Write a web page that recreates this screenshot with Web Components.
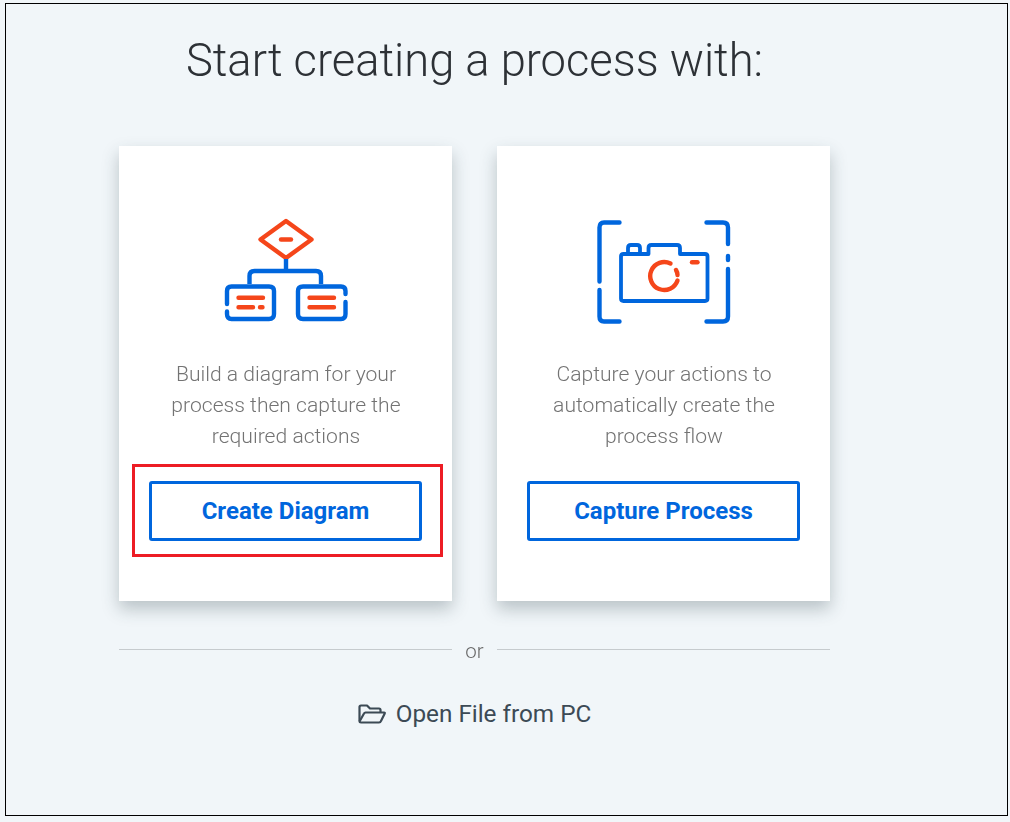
<!DOCTYPE html>
<html>
<head>
<meta charset="utf-8">
<style>
  html, body { margin: 0; background: #f1f6f9; }
  body { font-family: Roboto, "Liberation Sans", sans-serif; }
</style>
</head>
<body>
<process-start>
  <choice-card label="Create Diagram" marked>
    <svg slot="icon" width="150" height="120" viewBox="0 0 150 120" fill="none" stroke-width="4.400" stroke-linecap="round" stroke-linejoin="round">
      <g stroke="#f5461a">
        <path d="M76 11L101.500 29.500L76 48L50.500 29.500Z"/>
        <path d="M71 29.500H81"/>
        <path d="M28.500 87.700H53M28.500 97.300H43M50 97.300H52.500"/>
        <path d="M99.500 87.700H124M99.500 97.300H124"/>
      </g>
      <g stroke="#0066dd">
        <path d="M76 49V61M39.500 74V66Q39.500 61 44.500 61H106Q111 61 111 66V74" stroke-linecap="butt"/>
        <path d="M17 94V81Q17 76.500 21.500 76.500H59Q64 76.500 64 81V104Q64 109 59 109H21.500Q17 109 17 104V101.500"/>
        <path d="M135.500 84V81Q135.500 76.500 131 76.500H93Q88 76.500 88 81V104Q88 109 93 109H131Q135.500 109 135.500 104V92"/>
      </g>
    </svg>
    Build a diagram for your process then capture the required actions
  </choice-card>
  <choice-card label="Capture Process">
    <svg slot="icon" width="150" height="120" viewBox="-1 0 150 120" fill="none" stroke-width="4.400" stroke-linecap="round" stroke-linejoin="round">
      <g stroke="#0066dd">
        <path d="M30.500 12.500H15Q10.500 12.500 10.500 17.500V71.500M10.500 80V106.500Q10.500 111.500 15 111.500H30.500"/>
        <path d="M117.500 12.500H134Q139 12.500 139 17.500V34M139 46V50M139 59V106.500Q139 111.500 134 111.500H117.500"/>
        <path d="M39 44V38Q39 35 42 35H48Q51 35 51 38V44M59.500 44V38Q59.500 35 62.500 35H88Q91 35 91 38V44H116Q118.500 44 118.500 46.500V88.500Q118.500 91 116 91H34.500Q32 91 32 88.500V46.500Q32 44 34.500 44H59.500" stroke-width="3.800"/>
      </g>
      <g stroke="#f5461a">
        <path d="M81.500 53.500A14 14 0 1 0 88.500 70.500"/>
        <path d="M87 60Q88.500 62.500 88.500 65"/>
        <path d="M103 52.300H108.500"/>
      </g>
    </svg>
    Capture your actions to automatically create the process flow
  </choice-card>
</process-start>
<script>
class ProcessStart extends HTMLElement {
  constructor() {
    super();
    this.attachShadow({ mode: 'open' });
    this.shadowRoot.innerHTML = `
      <style>
        :host {
          display: block;
          box-sizing: border-box;
          width: 1003px;
          height: 813px;
          margin: 3px 0 0 5px;
          border: 1px solid #000;
          padding-left: 113px;
        }
        .content {
          width: 711px;
          display: flex;
          flex-direction: column;
        }
        h1 {
          margin: 28px 0 0;
          font: 300 45.300px/58px Roboto, sans-serif;
          color: #2d3136;
          text-align: center;
          white-space: nowrap;
          will-change: transform;
        }
        .cards {
          display: flex;
          gap: 45px;
          margin-top: 56px;
        }
      </style>
      <div class="content">
        <h1>Start creating a process with:</h1>
        <div class="cards"><slot></slot></div>
        <or-divider></or-divider>
        <open-file></open-file>
      </div>
    `;
  }
}

class ChoiceCard extends HTMLElement {
  constructor() {
    super();
    this.attachShadow({ mode: 'open' });
    this.shadowRoot.innerHTML = `
      <style>
        :host {
          display: block;
          position: relative;
          box-sizing: border-box;
          width: 333px;
          height: 455px;
          background: #fff;
          box-shadow: 0 8px 16px rgba(40, 60, 70, 0.28);
        }
        .card {
          display: flex;
          flex-direction: column;
          align-items: center;
        }
        .icon {
          height: 120px;
          margin-top: 64px;
          margin-right: 1px;
        }
        ::slotted(svg) { display: block; }
        p {
          width: 270px;
          height: 94px;
          margin: 28px 0 0;
          font: 300 21.100px/31px Roboto, sans-serif;
          color: #737373;
          text-align: center;
          will-change: transform;
        }
        button {
          box-sizing: border-box;
          width: 273px;
          height: 60px;
          margin-top: 29px;
          background: #fff;
          border: 3px solid #0066dd;
          border-radius: 3px;
          font: 700 24px Roboto, sans-serif;
          color: #0066dd;
          cursor: pointer;
        }
        /* red box drawn over the card in the screenshot */
        .mark {
          display: none;
          position: absolute;
          left: 13px;
          top: 318px;
          width: 311px;
          height: 93px;
          box-sizing: border-box;
          border: 3px solid #ed1c24;
        }
        :host([marked]) .mark { display: block; }
      </style>
      <div class="card">
        <div class="icon"><slot name="icon"></slot></div>
        <p><slot></slot></p>
        <button>${this.getAttribute('label')}</button>
      </div>
      <div class="mark"></div>
    `;
  }
}

class OrDivider extends HTMLElement {
  constructor() {
    super();
    this.attachShadow({ mode: 'open' });
    this.shadowRoot.innerHTML = `
      <style>
        :host {
          display: grid;
          grid-template-columns: 333px 45px 333px;
          align-items: start;
          margin-top: 36px;
          height: 28px;
        }
        i { height: 1px; margin-top: 12px; background: #c6cbce; }
        span {
          font: 300 20.500px/28px Roboto, sans-serif;
          color: #6a6a6a;
          text-align: center;
          will-change: transform;
        }
      </style>
      <i></i><span>or</span><i></i>
    `;
  }
}

class OpenFile extends HTMLElement {
  constructor() {
    super();
    this.attachShadow({ mode: 'open' });
    this.shadowRoot.innerHTML = `
      <style>
        :host {
          display: flex;
          align-items: center;
          justify-content: center;
          gap: 10px;
          margin-top: 33px;
          font: 400 24.300px/32px Roboto, sans-serif;
          color: #3c4a55;
        }
        svg { display: block; }
      </style>
      <svg width="28" height="20" viewBox="0 0 28 20" fill="none" stroke="#3c4a55" stroke-width="2.200" stroke-linejoin="round">
        <path d="M1.500 17V3Q1.500 1.500 3 1.500H9L12 4.500H21Q22.500 4.500 22.500 6V8"/>
        <path d="M1.500 17.500L6 9.500Q6.500 8.500 7.500 8.500H26Q27.200 8.500 26.600 9.700L23 17Q22.500 18.500 21 18.500H3Q1.500 18.500 1.500 17.500Z"/>
      </svg>
      <span>Open File from PC</span>
    `;
  }
}

customElements.define('process-start', ProcessStart);
customElements.define('choice-card', ChoiceCard);
customElements.define('or-divider', OrDivider);
customElements.define('open-file', OpenFile);
</script>
</body>
</html>
